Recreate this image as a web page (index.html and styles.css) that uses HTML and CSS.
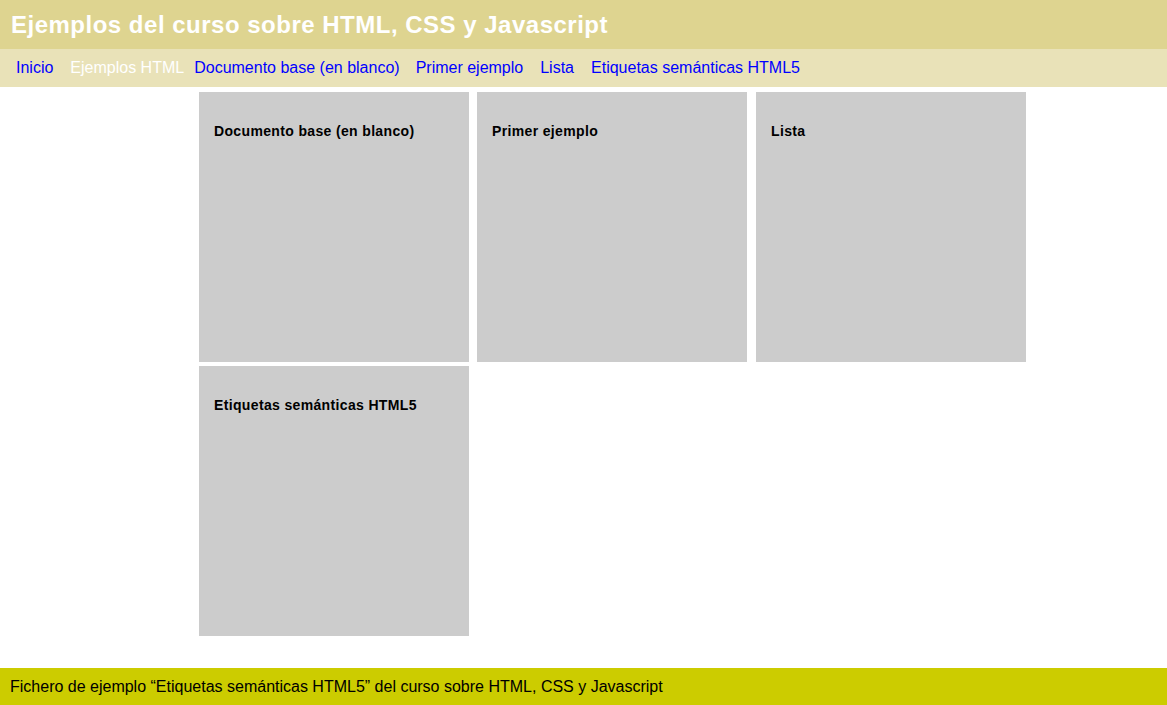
FILE: index.html
```html
<!DOCTYPE html>
<html lang="es">
<head>
<meta charset="utf-8">
<title>Etiquetas semánticas HTML5</title>
<link rel="stylesheet" href="styles.css">
</head>
<body>
<header class="site-header">
  <h1 class="site-title">Ejemplos del curso sobre HTML, CSS y Javascript</h1>
</header>
<nav class="site-nav">
  <a class="nav-link" href="#">Inicio</a>
  <span class="nav-current">Ejemplos HTML</span>
  <a class="nav-link" href="#">Documento base (en blanco)</a>
  <a class="nav-link" href="#">Primer ejemplo</a>
  <a class="nav-link nav-link-wide" href="#">Lista</a>
  <a class="nav-link" href="#">Etiquetas semánticas HTML5</a>
</nav>
<main class="content">
  <div class="grid">
    <article class="card"><h3 class="card-title">Documento base (en blanco)</h3></article>
    <article class="card"><h3 class="card-title">Primer ejemplo</h3></article>
    <article class="card card-last"><h3 class="card-title">Lista</h3></article>
    <article class="card"><h3 class="card-title">Etiquetas semánticas HTML5</h3></article>
  </div>
</main>
<footer class="site-footer">Fichero de ejemplo “Etiquetas semánticas HTML5” del curso sobre HTML, CSS y Javascript</footer>
</body>
</html>
```
FILE: styles.css
```css
html, body {
  margin: 0;
  padding: 0;
}
body {
  font-family: "Liberation Sans", Arial, sans-serif;
  font-size: 16px;
  background: #fff;
  color: #000;
  height: 705px;
  display: flex;
  flex-direction: column;
}
.site-header {
  background: #ded490;
  height: 49px;
  display: flex;
  align-items: center;
  padding: 0 11px;
}
.site-title {
  margin: 0;
  color: #fff;
  font-size: 24px;
  font-weight: bold;
  letter-spacing: 0.5px;
}
.site-nav {
  background: #e9e2b8;
  height: 38px;
  display: flex;
  align-items: center;
  padding: 0 8px;
}
.nav-link, .nav-current {
  padding: 0 8px;
  text-decoration: none;
  color: #0000ff;
}
.nav-current {
  color: #fff;
  padding: 0 2px 0 9px;
}
.nav-link-wide {
  padding: 0 9px 0 9px;
}
.content {
  flex: 1;
  padding: 5px 0 0 199px;
}
.grid {
  display: grid;
  grid-template-columns: 270px 270px 271px;
  grid-auto-rows: 270px;
  column-gap: 8px;
  row-gap: 4px;
}
.card {
  background: #ccc;
  padding: 15px;
  width: 270px;
  box-sizing: border-box;
}
.card-last {
  justify-self: end;
}
.card-title {
  margin: 16px 0 0;
  font-size: 14px;
  font-weight: bold;
  letter-spacing: 0.35px;
}
.site-footer {
  background: #cccc00;
  height: 37px;
  display: flex;
  align-items: center;
  padding: 0 10px;
}
```
